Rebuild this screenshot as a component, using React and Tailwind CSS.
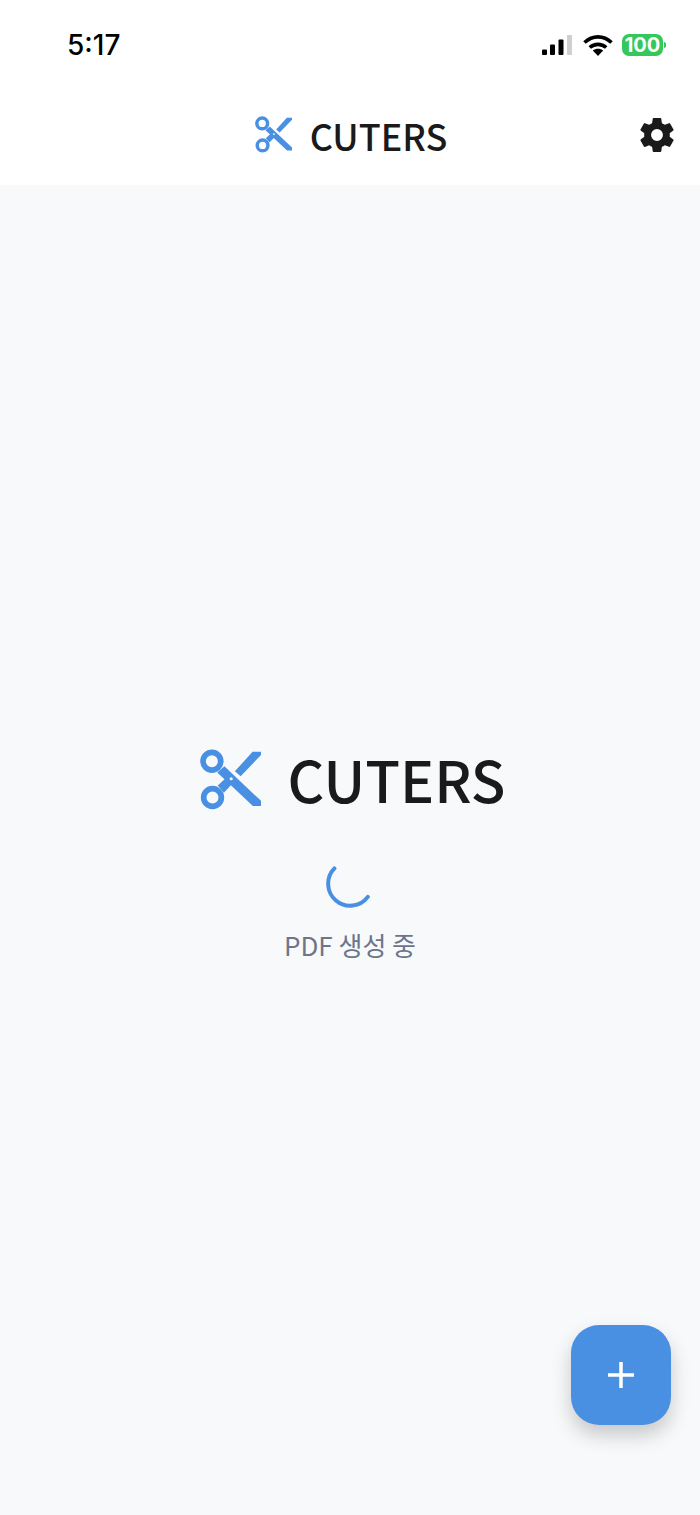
import React from 'react';
import { IoSettingsSharp } from 'react-icons/io5';

const ScissorsLogo = ({ className, bg = '#f8f9fb' }) => (
    <svg viewBox="0 0 60 60" className={className} fill="none">
        <circle cx="11.7" cy="12" r="8.7" stroke="#4a90e2" strokeWidth="5.6" />
        <circle cx="12.3" cy="47.7" r="8.7" stroke="#4a90e2" strokeWidth="5.6" />
        <path d="M24 17 L60 51 L60 56 L52 56 L17 23 Z" fill="#4a90e2" />
        <path d="M17.5 36 L27.3 26.7 L31.7 34.3 L23.5 43 Z" fill="#4a90e2" />
        <path d="M34.3 22 L51.7 2.7 L60 2.7 L60 6 L40 26.7 Z" fill="#4a90e2" />
        <circle cx="30.7" cy="29.3" r="1.5" fill={bg} />
    </svg>
);

const StatusIcons = () => (
    <div className="flex items-center">
        <svg viewBox="0 0 31 20" className="w-[31px] h-[20px]">
            <rect x="0" y="14.5" width="5" height="5.5" rx="1" fill="#000" />
            <rect x="8" y="9.5" width="5" height="10.5" rx="1" fill="#000" />
            <rect x="16.5" y="4.5" width="5" height="15.5" rx="1" fill="#000" />
            <rect x="25" y="0" width="5" height="20" rx="1" fill="#cfcfcf" />
        </svg>
        <svg viewBox="0 0 30 21" className="w-[30px] h-[21px] ml-[10px]">
            <path d="M1.5 7.5 C9.5 0 20.5 0 28.5 7.5" fill="none" stroke="#000" strokeWidth="3.6" />
            <path d="M6.8 12.5 C11.5 8.3 18.5 8.3 23.2 12.5" fill="none" stroke="#000" strokeWidth="3.6" />
            <path d="M15 21 L9.8 15.6 C12.8 13.2 17.2 13.2 20.2 15.6 Z" fill="#000" />
        </svg>
        <div className="ml-[9px] flex items-center">
            <div className="w-[41px] h-[22px] rounded-[7px] bg-[#34c759] text-white text-[20px] leading-[22px] font-bold text-center font-['Inter',sans-serif]">
                100
            </div>
            <div className="ml-[1px] w-[2px] h-[6px] rounded-r-sm bg-[#34c759]" />
        </div>
    </div>
);

const App = () => {
    return (
        <div className="flex flex-col w-full h-[1515px] bg-[#f8f9fb] font-['Noto_Sans_CJK_KR','Noto_Sans',sans-serif]">
            <div className="flex items-center justify-between h-[90px] bg-white pl-[67px] pr-[34px]">
                <span className="text-[28px] font-medium text-black font-['Inter',sans-serif]">5:17</span>
                <StatusIcons />
            </div>

            <header className="grid grid-cols-[1fr_auto_1fr] items-center h-[95px] pb-[6px] bg-white">
                <div />
                <div className="flex items-center gap-[18px] pl-[2px]">
                    <ScissorsLogo className="w-[37px] h-[37px]" bg="#ffffff" />
                    <span className="text-[36px] font-medium text-[#1a1a1a]">CUTERS</span>
                </div>
                <div className="flex justify-end pr-[24px]">
                    <IoSettingsSharp className="w-[38px] h-[38px] text-[#1a1a1a]" />
                </div>
            </header>

            <main className="relative flex-1 flex flex-col items-center justify-center">
                <div className="flex items-center gap-[27px] pl-[5px]">
                    <ScissorsLogo className="w-[61px] h-[61px]" />
                    <span className="text-[57px] font-medium text-[#1a1a1a]">CUTERS</span>
                </div>
                <svg viewBox="0 0 48 48" className="w-[48px] h-[48px] mt-[38px] -ml-[1px]" fill="none">
                    <path d="M8.4 8.4 A22 22 0 1 0 41.8 36.9" stroke="#4a90e2" strokeWidth="4" strokeLinecap="round" />
                </svg>
                <p className="mt-[17px] text-[26px] text-[#6c7589]">PDF 생성 중</p>

                <button className="absolute right-[29px] bottom-[90px] flex items-center justify-center w-[100px] h-[100px] rounded-[28px] bg-[#4a90e2] shadow-[0_10px_20px_rgba(0,0,0,0.2)]">
                    <svg viewBox="0 0 26 26" className="w-[26px] h-[26px]">
                        <path d="M13 0 V26 M0 13 H26" stroke="#fff" strokeWidth="3.5" />
                    </svg>
                </button>
            </main>
        </div>
    );
};

export default App;
